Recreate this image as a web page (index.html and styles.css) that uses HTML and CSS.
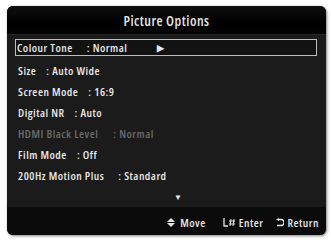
FILE: index.html
```html
<!DOCTYPE html>
<html>
<head>
<meta charset="utf-8">
<link rel="stylesheet" href="styles.css">
</head>
<body>
<div class="panel">
  <div class="title">Picture Options</div>
  <div class="list">
    <div class="row selected"><span class="label">Colour Tone</span><span class="val g14">: Normal</span><span class="arrow">&#9654;</span></div>
    <div class="row"><span class="label">Size</span><span class="val">: Auto Wide</span></div>
    <div class="row"><span class="label">Screen Mode</span><span class="val">: 16:9</span></div>
    <div class="row"><span class="label">Digital NR</span><span class="val">: Auto</span></div>
    <div class="row dim"><span class="label">HDMI Black Level</span><span class="val g15">: Normal</span></div>
    <div class="row"><span class="label">Film Mode</span><span class="val">: Off</span></div>
    <div class="row"><span class="label">200Hz Motion Plus</span><span class="val g14">: Standard</span></div>
    <div class="more">&#9660;</div>
  </div>
  <div class="footer">
    <span class="hint move"><svg width="8" height="9" viewBox="0 0 8 9"><path d="M4 0 L8 4 L0 4 Z M0 5 L8 5 L4 9 Z" fill="#e6e6e6"/></svg>Move</span>
    <span class="hint enter"><svg width="13" height="9" viewBox="0 0 13 9"><path d="M1 0 V8 H5" stroke="#e6e6e6" stroke-width="1.3" fill="none"/><path d="M8 1 L7 8 M11 1 L10 8 M6 3 H12 M6 6 H12" stroke="#e6e6e6" stroke-width="1" fill="none"/></svg>Enter</span>
    <span class="hint ret"><svg width="8" height="9" viewBox="0 0 8 9"><path d="M2 1.5 H5 A3 3 0 0 1 5 7.5 H1" stroke="#e6e6e6" stroke-width="1.4" fill="none"/><path d="M0 1.5 L3 0 L3 3 Z" fill="#e6e6e6"/></svg>Return</span>
  </div>
</div>
</body>
</html>
```
FILE: styles.css
```css
html, body {
  margin: 0;
  padding: 0;
  background: #ffffff;
}
body {
  width: 331px;
  height: 240px;
  overflow: hidden;
  font-family: "Open Sans", "Roboto", sans-serif;
  font-stretch: 75%;
}
.panel {
  margin: 6px 0 0 7px;
  width: 319px;
  height: 229px;
  border-radius: 6px;
  background: #1b1b1b;
  box-shadow: 1px 1px 3px rgba(0,0,0,0.5);
  display: flex;
  flex-direction: column;
  overflow: hidden;
}
.title {
  height: 29px;
  border-bottom: 1px solid #262626;
  background: linear-gradient(#101010, #000000 60%, #030303);
  color: #e4e4e4;
  font-size: 14px;
  font-weight: 600;
  letter-spacing: 0.5px;
  display: flex;
  align-items: center;
  justify-content: center;
  padding-top: 1px;
  box-sizing: border-box;
}
.list {
  flex: 1;
  padding: 4px 9px 0 8px;
  display: flex;
  flex-direction: column;
}
.row {
  height: 21px;
  display: flex;
  align-items: center;
  padding-left: 3px;
  color: #e8e8e8;
  font-size: 11.5px;
  font-weight: 600;
  letter-spacing: 0.5px;
  box-sizing: border-box;
}
.row.selected {
  height: 17px;
  margin-bottom: 4px;
  border: 1.5px solid #bdbdbd;
  background: #121212;
  padding-left: 1px;
}
.row.dim {
  color: #6a6a6a;
}
.val {
  margin-left: 10px;
}
.val.g14 { margin-left: 14px; }
.val.g15 { margin-left: 15px; }
.arrow {
  margin-left: 30px;
  font-size: 9px;
  color: #e8e8e8;
}
.more {
  height: 20px;
  display: flex;
  align-items: center;
  justify-content: center;
  padding-left: 24px;
  color: #e8e8e8;
  font-size: 8px;
}
.footer {
  height: 28px;
  background: #0b0b0b;
  display: flex;
  align-items: center;
  justify-content: flex-end;
  padding: 3px 7px 0 0;
  box-sizing: border-box;
  color: #e6e6e6;
  font-size: 11.5px;
  font-weight: 600;
  letter-spacing: 0.5px;
}
.hint {
  display: flex;
  align-items: center;
  gap: 3px;
}
.hint.move { gap: 5px; }
.hint.enter { margin-left: 17px; }
.hint.ret { margin-left: 13px; }
```
